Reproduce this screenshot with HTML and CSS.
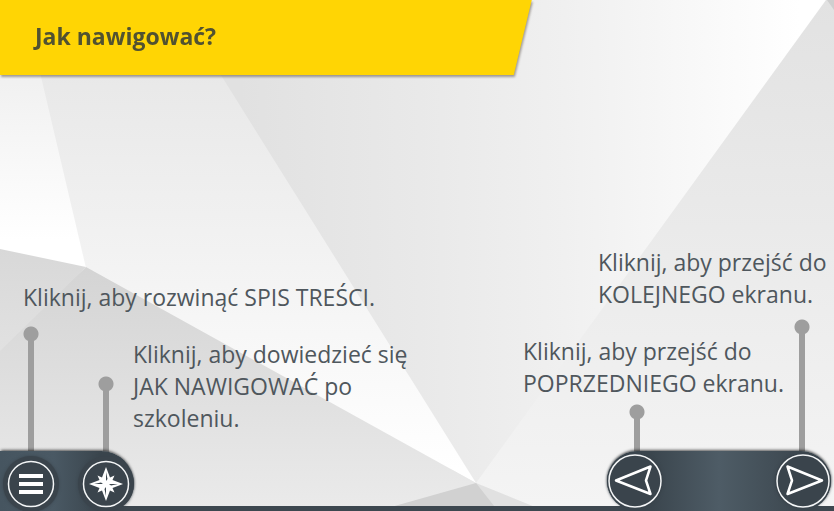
FILE: index.html
```html
<!DOCTYPE html>
<html lang="pl">
<head>
<meta charset="utf-8">
<meta name="viewport" content="width=device-width, initial-scale=1">
<title>Jak nawigować?</title>
<link rel="stylesheet" href="styles.css">
</head>
<body>
<div class="screen">
  <svg class="backdrop" viewBox="0 0 834 511" preserveAspectRatio="none" aria-hidden="true">
    <defs>
      <linearGradient id="g-left" gradientUnits="userSpaceOnUse" x1="0" y1="60" x2="0" y2="240"><stop offset="0" stop-color="#efefef"/><stop offset="1" stop-color="#ffffff"/></linearGradient>
      <linearGradient id="g-mid" gradientUnits="userSpaceOnUse" x1="0" y1="70" x2="0" y2="470"><stop offset="0" stop-color="#e8e8e8"/><stop offset=".45" stop-color="#f2f2f2"/><stop offset="1" stop-color="#ffffff"/></linearGradient>
      <linearGradient id="g-center" gradientUnits="userSpaceOnUse" x1="240" y1="0" x2="800" y2="0"><stop offset="0" stop-color="#e1e1e1"/><stop offset=".36" stop-color="#eaeaea"/><stop offset=".58" stop-color="#f0f0f0"/><stop offset="1" stop-color="#ffffff"/></linearGradient>
      <linearGradient id="g-right" gradientUnits="userSpaceOnUse" x1="0" y1="0" x2="0" y2="506"><stop offset="0" stop-color="#e2e2e2"/><stop offset=".45" stop-color="#eaeaea"/><stop offset="1" stop-color="#f4f4f4"/></linearGradient>
      <linearGradient id="g-low" gradientUnits="userSpaceOnUse" x1="0" y1="267" x2="0" y2="506"><stop offset="0" stop-color="#d4d4d4"/><stop offset="1" stop-color="#eaeaea"/></linearGradient>
      <linearGradient id="g-edge" gradientUnits="userSpaceOnUse" x1="0" y1="249" x2="0" y2="350"><stop offset="0" stop-color="#d8d8d8"/><stop offset="1" stop-color="#e1e1e1"/></linearGradient>
    </defs>
    <path fill="url(#g-center)" d="M174 0H834V511H476Z"/>
    <path fill="url(#g-left)" d="M0 0H30L90 268L0 252Z"/>
    <path fill="url(#g-mid)" d="M23 0H174L476 483L86 268Z"/>
    <path fill="url(#g-right)" d="M826 0H834V511H476V483Z"/>
    <path fill="#cfcfcf" d="M827 0H834V10Z"/>
    <path fill="url(#g-low)" d="M86 267L476 483V511H0V345Z"/>
    <path fill="url(#g-edge)" d="M0 249L86 267L0 351Z"/>
    <path fill="#e1e1e1" d="M476 483L545 511H480Z"/>
    <path fill="#d1d1d1" d="M476 483L498 511H377Z"/>
  </svg>

  <header class="title-wrap"><div class="title-bar"><h1>Jak nawigować?</h1></div></header>

  <main class="callouts">
    <section class="group-left">
      <p class="toc-text">Kliknij, aby rozwinąć SPIS TREŚCI.</p>
      <span class="pin toc-pin"></span>
      <span class="pin help-pin"></span>
      <p class="help-text">Kliknij, aby dowiedzieć się<br>JAK NAWIGOWAĆ po<br>szkoleniu.</p>
    </section>
    <section class="group-right">
      <p class="next-text">Kliknij, aby przejść do<br>KOLEJNEGO ekranu.</p>
      <p class="prev-text">Kliknij, aby przejść do<br>POPRZEDNIEGO ekranu.</p>
      <span class="pin prev-pin"></span>
      <span class="pin next-pin"></span>
    </section>
  </main>

  <nav class="dock" aria-label="Nawigacja">
    <div class="dock-left">
      <button class="round" type="button" aria-label="Spis treści">
        <svg viewBox="0 0 56 56"><circle class="ring" cx="28" cy="28" r="22.5"/><path class="solid" d="M16 18h24v4H16zM16 26h24v4H16zM16 34h24v4H16z"/></svg>
      </button>
      <button class="round" type="button" aria-label="Jak nawigować">
        <svg viewBox="0 0 56 56"><circle class="ring" cx="28" cy="28" r="22.5"/>
          <path class="solid" d="M28 11L32 21.500L36.500 19.500L34.500 24L45 28L34.500 32L36.500 36.500L32 34.500L28 45L24 34.500L19.500 36.500L21.500 32L11 28L21.500 24L19.500 19.500L24 21.500Z"/>
          <path class="facet" d="M28 25V16L29.500 23ZM31 28H40L33 29.500ZM28 31V40L26.500 33ZM25 28H16L23 26.500Z"/></svg>
      </button>
    </div>
    <div class="dock-right">
      <button class="round" type="button" aria-label="Poprzedni ekran">
        <svg viewBox="0 0 56 56"><circle class="ring" cx="28" cy="28" r="26"/><path class="arrow" d="M9 27.500L43.500 13.500L39 27.500L43.500 41Z"/></svg>
      </button>
      <button class="round" type="button" aria-label="Kolejny ekran">
        <svg viewBox="0 0 56 56"><circle class="ring" cx="28" cy="28" r="26"/><path class="arrow" d="M47 27.500L12.500 13.500L17 27.500L12.500 41Z"/></svg>
      </button>
    </div>
  </nav>
</div>
</body>
</html>
```

FILE: styles.css
```css
* { box-sizing: border-box; }

body {
  margin: 0;
  font-family: "Open Sans", sans-serif;
  font-size: 23px;
  line-height: 32px;
  color: #4f575d;
}

h1, p { margin: 0; }

.screen {
  position: relative;
  min-height: 100vh;
  display: flex;
  flex-direction: column;
  overflow: hidden;
  isolation: isolate;
}

.backdrop {
  position: absolute;
  inset: 0;
  z-index: -2;
  width: 100%;
  height: 100%;
}

.title-wrap { filter: drop-shadow(1px 2px 1px rgba(80, 70, 60, .5)); }

.title-bar {
  width: 64%;
  padding: 20px 37px 23px 35px;
  background: #ffd504;
  clip-path: polygon(0 0, calc(100% - 2px) 0, calc(100% - 20px) 100%, 0 100%);
}

h1 {
  font-size: 23px;
  line-height: 32px;
  font-weight: 700;
  color: #515231;
}

.callouts {
  flex: 1;
  display: flex;
  justify-content: space-between;
  align-items: flex-end;
  white-space: nowrap;
}

.group-left {
  display: grid;
  grid-template-columns: 16px 16px auto;
  column-gap: 59px;
  padding-left: 23px;
}

.toc-text { grid-column: 1 / -1; }
.toc-pin { margin-top: 13px; }
.help-pin { margin-top: 63px; }
.help-text { margin: 25px 0 17px -40px; }

.group-right {
  display: grid;
  grid-template-columns: 271px 16px;
  grid-template-rows: auto auto 1fr;
  padding-right: 24px;
  height: 205px;
}

.next-text {
  grid-column: 1 / -1;
  margin: 0 -24px 0 75px;
}

.prev-text { grid-area: 2 / 1; margin-top: 25px; }
.prev-pin { grid-area: 3 / 1; margin: 5px 0 0 106px; }
.next-pin { grid-area: 2 / 2 / 4; margin-top: 9px; }

.pin {
  width: 16px;
  margin-bottom: -8px;
  background:
    radial-gradient(circle at 8px 8px, #9e9e9e 7px, transparent 8px),
    linear-gradient(#9e9e9e, #9e9e9e) center 8px / 6px 100% no-repeat;
}

.dock {
  position: relative;
  display: flex;
  justify-content: space-between;
  height: 60px;
}

.dock::after {
  content: "";
  position: absolute;
  inset: auto 0 0;
  z-index: -1;
  height: 5px;
  background: #3d474f;
}

.dock-left, .dock-right {
  display: flex;
  justify-content: space-between;
}

.dock-left {
  width: 134px;
  padding: 5px 0 0 3px;
  border-radius: 0 36px 30px 0;
  background: linear-gradient(90deg, #465560, #4a5964 40%, #3a454d 75%);
  box-shadow: 0 -2px 3px -1px rgba(0, 0, 0, .65);
}

.dock-right {
  width: 224px;
  margin-right: 3px;
  border-radius: 30px;
  padding-top: 2px;
  background: linear-gradient(90deg, #3b464e 20%, #4e5c66 50%, #3d4850 85%);
  box-shadow: 0 -2px 3px -1px rgba(0, 0, 0, .65);
}

.round {
  width: 56px;
  height: 56px;
  padding: 0;
  border: 0;
  border-radius: 50%;
  background: #3a444c;
  box-shadow: 0 0 3px #3a444c;
  cursor: pointer;
}

.round svg { display: block; width: 56px; height: 56px; }
.ring { fill: none; stroke: #f4f6f7; stroke-width: 1.5; }
.solid { fill: #fff; }
.facet { fill: #3a444c; }
.arrow { fill: none; stroke: #fff; stroke-width: 2.5; stroke-linejoin: round; }
```
